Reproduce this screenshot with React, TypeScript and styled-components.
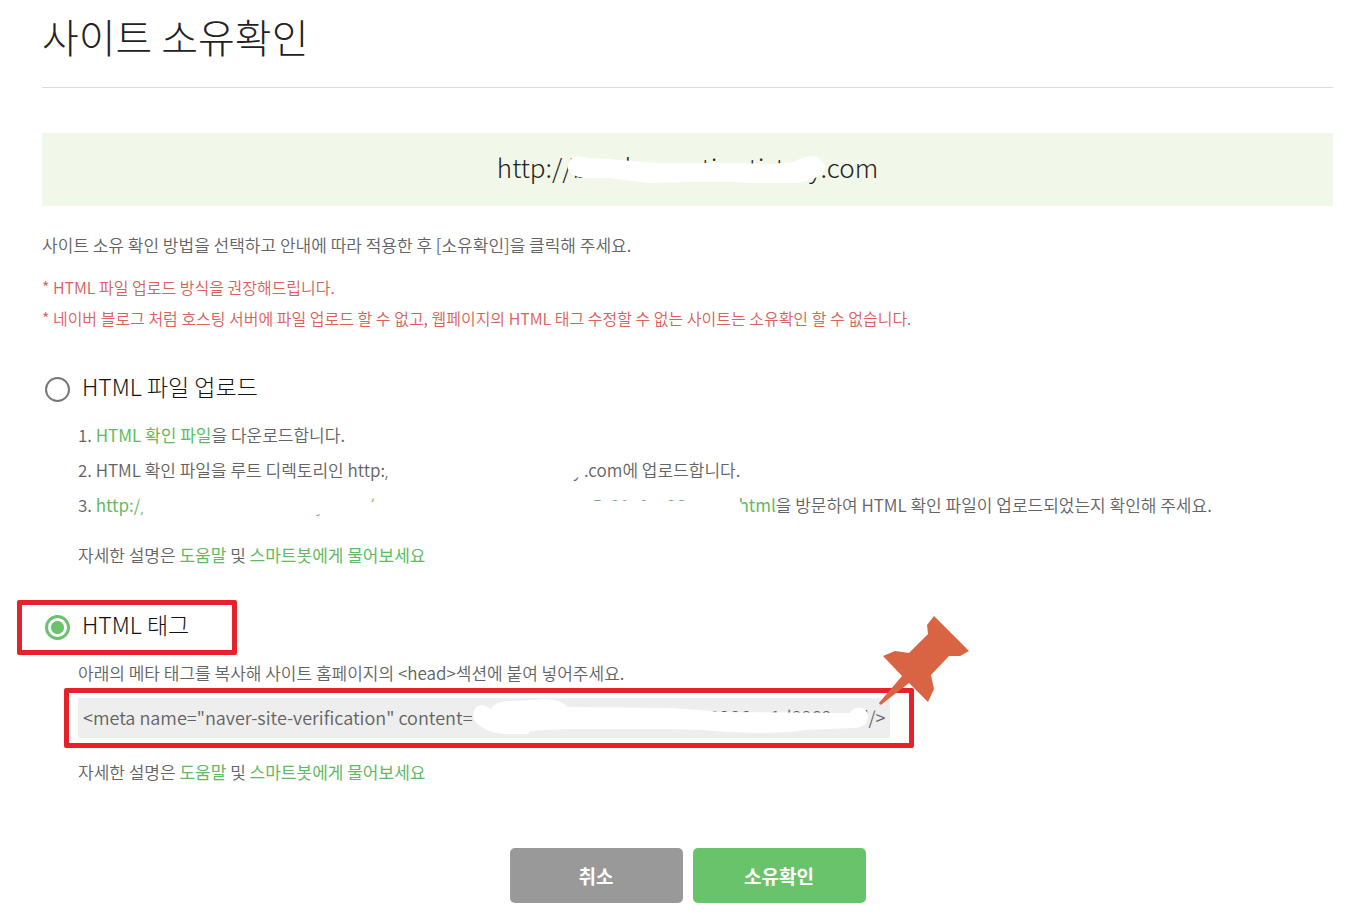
import React from "react";
import styled, { createGlobalStyle } from "styled-components";

const GlobalStyle = createGlobalStyle`
  * { box-sizing: border-box; }
  body {
    margin: 0;
    background: #fff;
    color: #636363;
    font-family: "Noto Sans CJK KR", sans-serif;
    font-size: 17px;
    font-weight: 350;
    line-height: 35px;
  }
`;

const Page = styled.main`
  padding: 0 20px 13px 42px;
`;

const Title = styled.h1`
  margin: 0;
  padding: 6px 0 21px;
  border-bottom: 1px solid #ddd;
  color: #222;
  font-size: 40px;
  font-weight: 300;
  line-height: 60px;
`;

const SiteBanner = styled.div`
  margin-top: 45px;
  padding: 14px 0 19px;
  background: #f1f7e9;
  color: #222;
  font-size: 26px;
  font-weight: 300;
  line-height: 40px;
  text-align: center;
  white-space: nowrap;
`;

const Intro = styled.p`
  margin: 22px 0 10px;
  line-height: 34px;
`;

const Notes = styled.ul`
  margin: 0;
  padding: 0;
  list-style: none;
  color: #d9605b;
  font-size: 16px;
  line-height: 31px;
`;

const Option = styled.section`
  margin-top: 38px;
`;

const OptionHead = styled.div`
  position: relative;
  display: flex;
  align-items: flex-start;
  gap: 12px;
  padding-left: 3px;
  height: 32px;
`;

const Radio = styled.input`
  appearance: none;
  flex: none;
  width: 25px;
  height: 25px;
  margin: 5px 0 0;
  border: 2px solid #777;
  border-radius: 50%;
  background: #fff;

  &:checked {
    border: 3px solid #69c36b;
    background: radial-gradient(circle, #69c36b 6px, #fff 7px);
  }
`;

const OptionLabel = styled.label`
  color: #111;
  font-size: 23px;
  font-weight: 300;
  line-height: 28px;
`;

const OptionBody = styled.div`
  padding: 13px 0 0 36px;
`;

const Steps = styled.ol`
  margin: 0 0 15px;
  padding: 0;
  list-style: none;
`;

const Text = styled.p`
  margin: 0;
`;

const Link = styled.a`
  color: #5fbb62;
  font-weight: 400;
  text-decoration: none;
`;

const CodeRow = styled.div`
  position: relative;
  width: fit-content;
  margin: 8px 0 16px;
`;

const Code = styled.code`
  display: block;
  padding: 0 5px 2px;
  background: #eee;
  font-family: inherit;
  font-size: 18px;
  line-height: 38px;
  white-space: nowrap;
`;

/* A run of text that has been painted over, with a few letters still peeking out. */
const Redacted = styled.span<{ $width: number }>`
  position: relative;
  display: inline-flex;
  width: ${(p) => p.$width}px;
  height: 1em;
  line-height: 1em;
  text-align: left;
`;

const Piece = styled.span<{ $width: number }>`
  flex: 0 0 ${(p) => p.$width}px;
`;

const Smear = styled.svg`
  position: absolute;
  inset: 0 auto auto 0;
  overflow: visible;
  fill: #fff;
`;

const Frame = styled.span<{ $inset: string }>`
  position: absolute;
  inset: ${(p) => p.$inset};
  border: 5px solid #e5222a;
  border-radius: 2px;
  pointer-events: none;
`;

const HeadFrame = styled(Frame)`
  width: 220px;
`;

const Pin = styled.svg`
  position: absolute;
  top: -84px;
  right: -81px;
  fill: #d96443;
`;

const Actions = styled.div`
  display: flex;
  justify-content: center;
  gap: 10px;
  margin-top: 59px;
`;

const Button = styled.button<{ $primary?: boolean }>`
  width: 173px;
  height: 55px;
  padding: 0;
  border: 0;
  border-radius: 5px;
  background: ${(p) => (p.$primary ? "#69c36b" : "#999")};
  color: #fff;
  font-family: inherit;
  font-size: 19px;
  font-weight: 700;
`;

const Help = () => (
  <Text>
    자세한 설명은 <Link href="#help">도움말</Link> 및 <Link href="#bot">스마트봇에게 물어보세요</Link>
  </Text>
);

export default function App() {
  return (
    <>
      <GlobalStyle />
      <Page>
        <Title>사이트 소유확인</Title>
        <SiteBanner>
          http://
          <Redacted $width={248}>
            <Piece $width={52}>b</Piece>
            <Piece $width={77}>l</Piece>
            <Piece $width={47}>ti</Piece>
            <Piece $width={60}>tist</Piece>
            <Piece $width={12}>y</Piece>
            <Smear width="256" height="30" viewBox="574 154 256 30">
              <path d="M569 164Q571 157 578 156Q586 157 590 158L610 159L633 161L660 163L740 163L770 164L795 162Q804 156 815 156Q824 159 826 166Q826 171 822 175L812 180L798 183H750L735 182H690L650 183L632 181L610 178H585Q571 176 569 169Z" />
            </Smear>
          </Redacted>
          .com
        </SiteBanner>
        <Intro>사이트 소유 확인 방법을 선택하고 안내에 따라 적용한 후 [소유확인]을 클릭해 주세요.</Intro>
        <Notes>
          <li>* HTML 파일 업로드 방식을 권장해드립니다.</li>
          <li>* 네이버 블로그 처럼 호스팅 서버에 파일 업로드 할 수 없고, 웹페이지의 HTML 태그 수정할 수 없는 사이트는 소유확인 할 수 없습니다.</li>
        </Notes>

        <Option>
          <OptionHead>
            <Radio type="radio" name="method" id="method-file" />
            <OptionLabel htmlFor="method-file">HTML 파일 업로드</OptionLabel>
          </OptionHead>
          <OptionBody>
            <Steps>
              <li>1. <Link href="#file">HTML 확인 파일</Link>을 다운로드합니다.</li>
              <li>
                2. HTML 확인 파일을 루트 디렉토리인 http:
                <Redacted $width={199}>
                  <Piece $width={188}>/</Piece>
                  <Piece $width={11}>y</Piece>
                  <Smear width="199" height="20" viewBox="0 0 199 20">
                    <path d="M1 -2H198V14L189 18L181 17H3V15H-1Z" />
                  </Smear>
                </Redacted>
                .com에 업로드합니다.
              </li>
              <li>
                3. <Link href="#check">
                  http:/
                  <Redacted $width={598}>
                    <Piece $width={175}>/</Piece>
                    <Piece $width={52}>y</Piece>
                    <Piece $width={225}>/</Piece>
                    <Piece $width={146}>5c21a0ac26</Piece>
                    <Smear width="598" height="22" viewBox="0 0 598 22">
                      <path d="M0 -2H220V6H440V5H556V-2H594L602 8V22H190V17L175 19V22H5V16H-1Z" />
                    </Smear>
                  </Redacted>
                  html
                </Link>을 방문하여 HTML 확인 파일이 업로드되었는지 확인해 주세요.
              </li>
            </Steps>
            <Help />
          </OptionBody>
        </Option>

        <Option>
          <OptionHead>
            <Radio type="radio" name="method" id="method-tag" defaultChecked />
            <OptionLabel htmlFor="method-tag">HTML 태그</OptionLabel>
            <HeadFrame $inset="-10px auto -13px -25px" />
          </OptionHead>
          <OptionBody>
            <Text>아래의 메타 태그를 복사해 사이트 홈페이지의 &lt;head&gt;섹션에 붙여 넣어주세요.</Text>
            <CodeRow>
              <Code>
                &lt;meta name="naver-site-verification" content=
                <Redacted $width={396}>
                  <Piece $width={200} />
                  <Piece $width={18}>3</Piece>
                  <Piece $width={40}>c903</Piece>
                  <Piece $width={40}>26</Piece>
                  <Piece $width={90}>1d8868</Piece>
                  <Piece $width={8}>"</Piece>
                  <Smear width="396" height="36" viewBox="473 708 396 36">
                    <path d="M473 716Q474 706 482 706Q488 707 491 710Q495 703 507 702L535 701Q560 698 567 708L670 709L700 711L720 713L850 714Q853 708 862 709Q868 711 868 719Q867 728 855 729L805 731L790 733L760 734L728 733L700 731L670 730H570L530 732L528 735H505Q488 734 479 726Q473 722 473 716Z" />
                  </Smear>
                </Redacted>
                /&gt;
              </Code>
              <Frame $inset="-10px -24px -10px -14px" />
              <Pin width="93" height="92" viewBox="878 614 93 92" aria-hidden="true">
                <path d="M934 616L969 651L960 656H949L931 675L934 689L928 702L909 683Q900 690 882 704Q880 706 879 703L902 676L883 656L895 651L909 653L928 634L927 625Z" />
              </Pin>
            </CodeRow>
            <Help />
          </OptionBody>
        </Option>

        <Actions>
          <Button type="button">취소</Button>
          <Button type="submit" $primary>소유확인</Button>
        </Actions>
      </Page>
    </>
  );
}
